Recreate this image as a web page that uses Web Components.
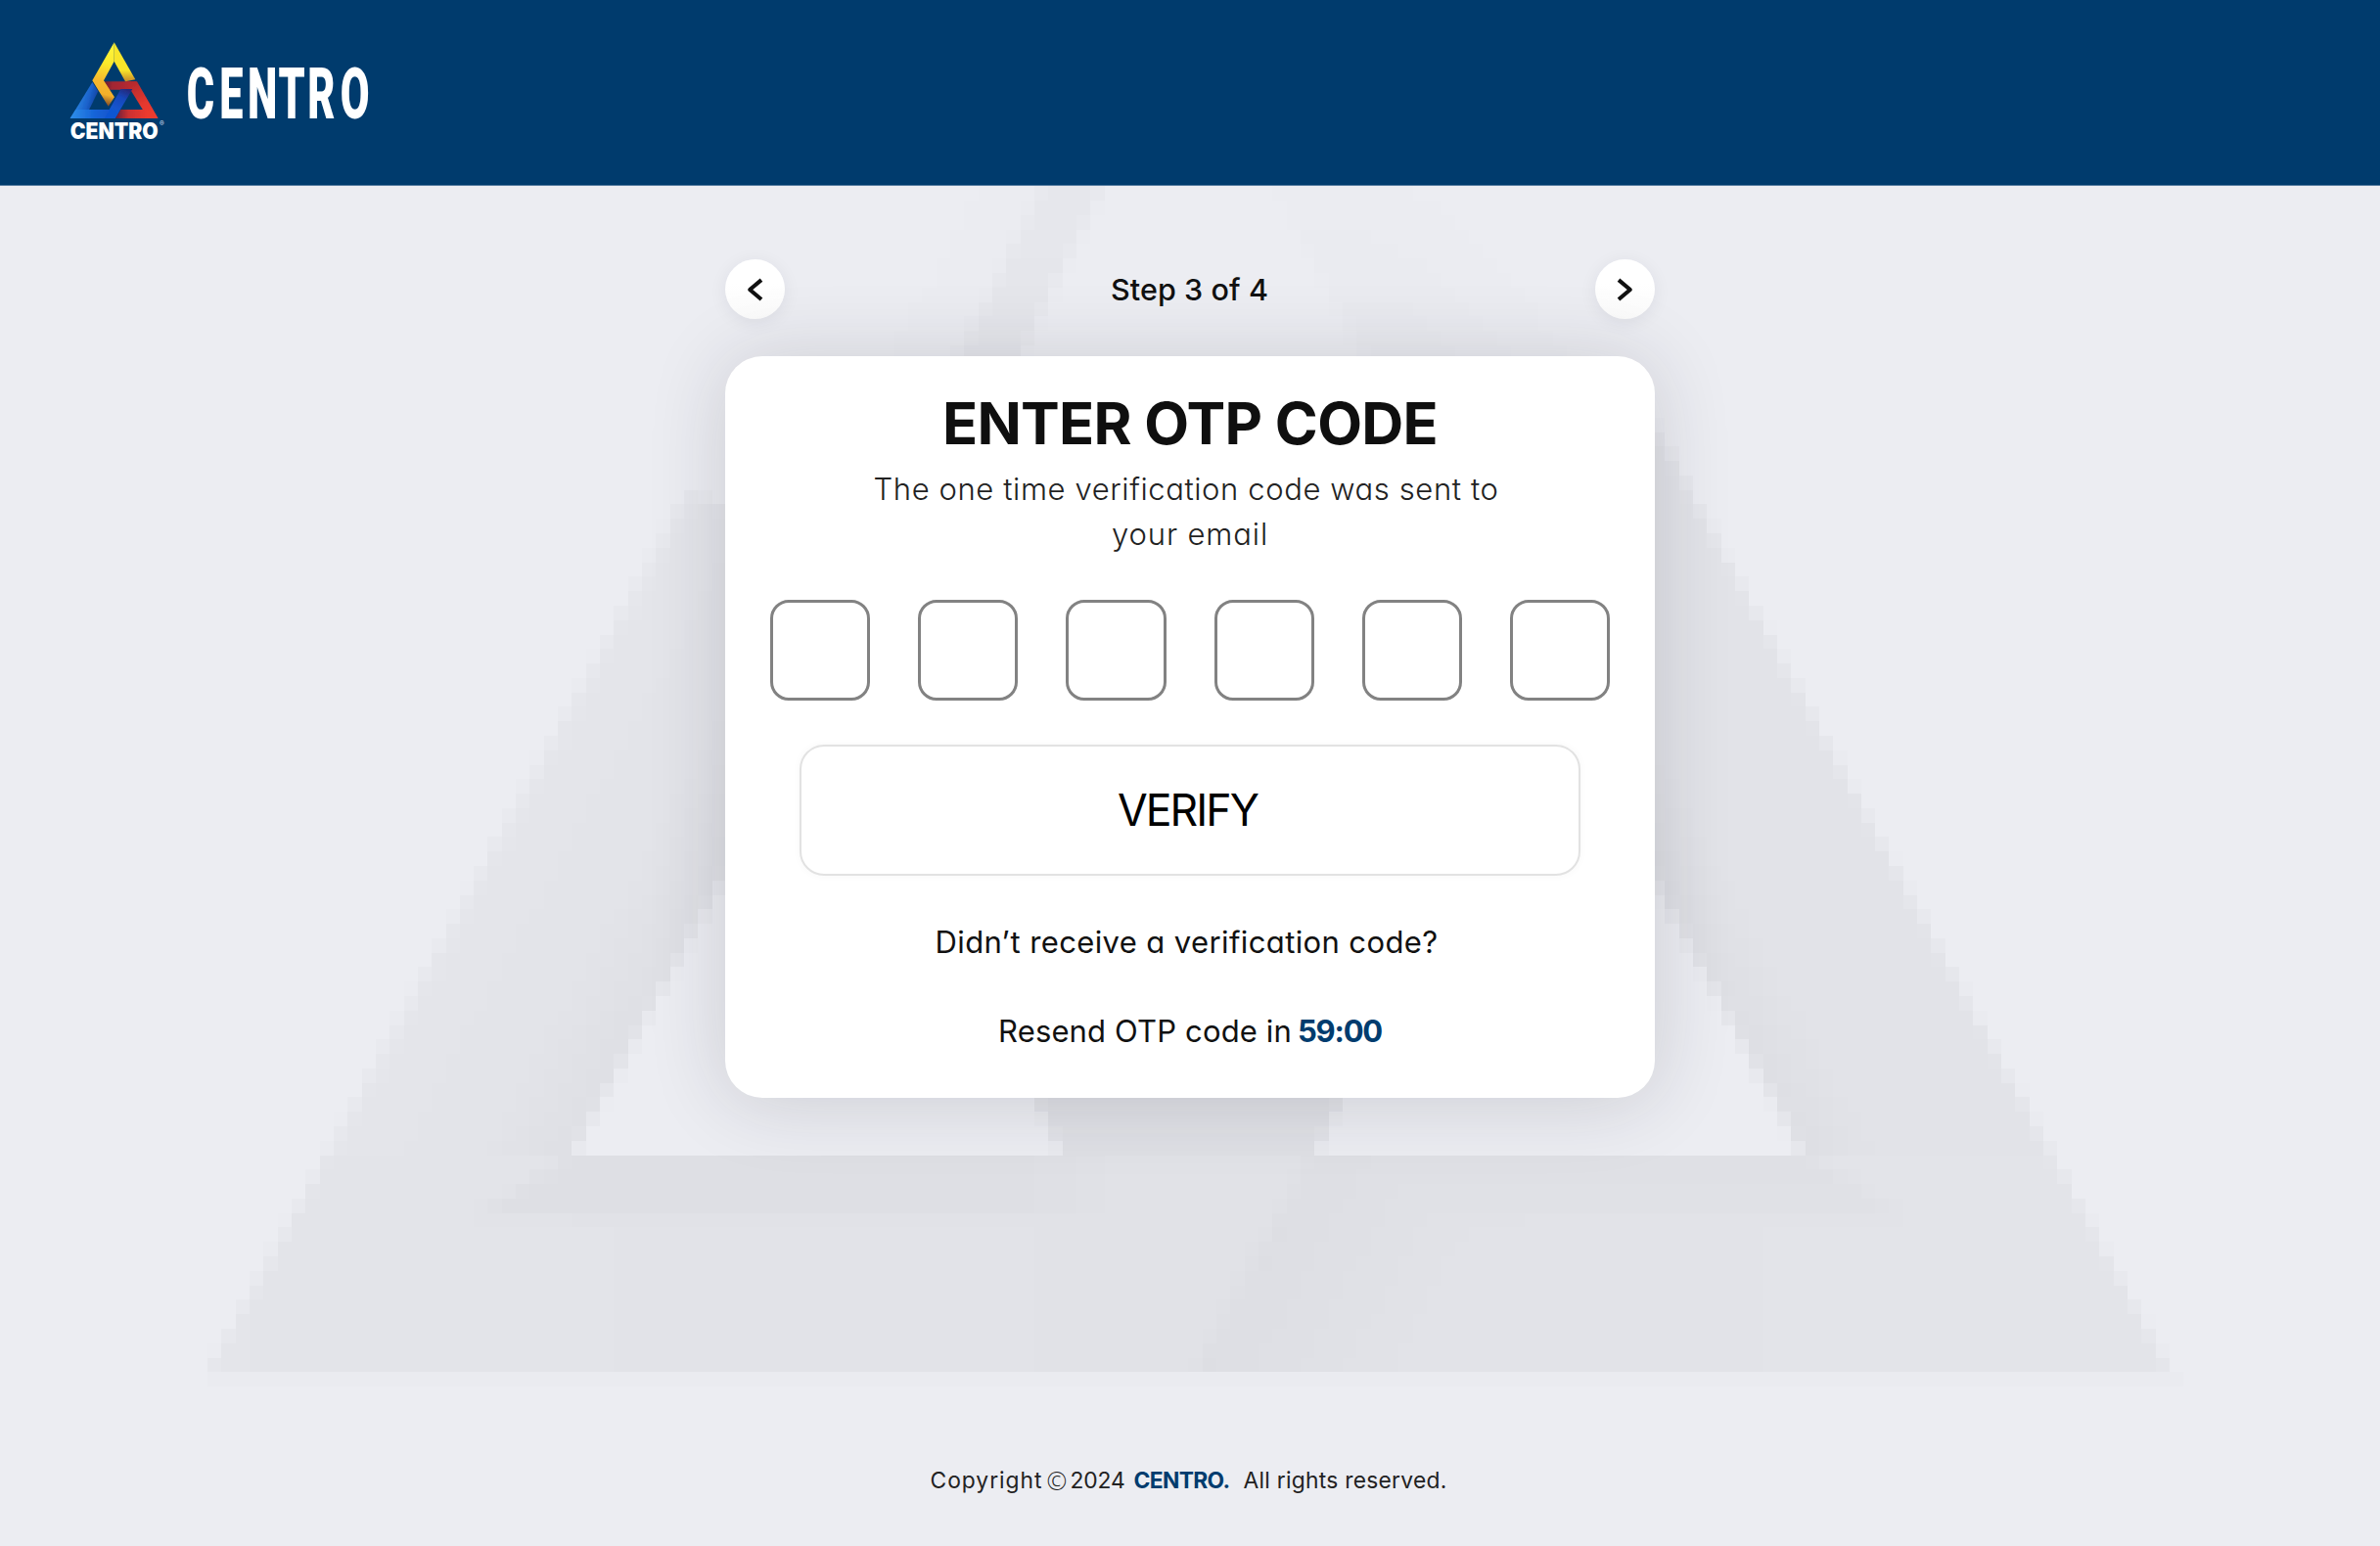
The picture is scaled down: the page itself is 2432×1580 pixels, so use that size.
<!DOCTYPE html>
<html lang="en">
<head>
<meta charset="utf-8">
<title>Centro</title>
<style>
body{margin:0;background:#ecedf2;font-family:Inter,"Open Sans",sans-serif;font-feature-settings:"cv11";color:#111}
</style>
</head>
<body>
<otp-page></otp-page>
<script>
const define=(name,html,setup)=>customElements.define(name,class extends HTMLElement{
  connectedCallback(){
    if(this.shadowRoot)return;
    this.attachShadow({mode:'open'}).innerHTML=html;
    if(setup)setup(this,this.shadowRoot);
  }
});

/* One line of text, tracked so that it fills the width given by "w". */
define('fit-line',`<style>
:host{display:block;white-space:nowrap;flex:none}
span{display:inline-block;white-space:pre}
</style><span></span>`,(host,root)=>{
  const s=root.querySelector('span'),w=+host.getAttribute('w');
  s.textContent=host.getAttribute('text');
  host.style.width=w+'px';
  const n=s.getBoundingClientRect().width;
  s.style.letterSpacing=((w-n)/s.textContent.length).toFixed(3)+'px';
});

define('brand-mark',`<style>:host{display:block;width:120px;height:120px}svg{display:block;overflow:visible}</style>
<svg width="120" height="120" viewBox="0 0 360 360">
<defs>
<linearGradient id="y" gradientUnits="userSpaceOnUse" x1="190" y1="60" x2="150" y2="235"><stop offset="0" stop-color="#fff43a"/><stop offset=".3" stop-color="#fbe92c"/><stop offset=".6" stop-color="#f6b82d"/><stop offset=".82" stop-color="#f3b02c"/><stop offset="1" stop-color="#7d4a28"/></linearGradient>
<linearGradient id="yr" gradientUnits="userSpaceOnUse" x1="205" y1="125" x2="205" y2="158"><stop offset="0" stop-color="#f8e52c"/><stop offset="1" stop-color="#c98d2c"/></linearGradient>
<linearGradient id="rt" gradientUnits="userSpaceOnUse" x1="135" y1="165" x2="235" y2="175"><stop offset="0" stop-color="#5d1c33"/><stop offset=".3" stop-color="#a12631"/><stop offset="1" stop-color="#b92b2f"/></linearGradient>
<linearGradient id="rr" gradientUnits="userSpaceOnUse" x1="235" y1="160" x2="290" y2="270"><stop offset="0" stop-color="#b52a2e"/><stop offset=".6" stop-color="#e6382e"/><stop offset="1" stop-color="#ee3b2f"/></linearGradient>
<linearGradient id="rb" gradientUnits="userSpaceOnUse" x1="175" y1="260" x2="270" y2="260"><stop offset="0" stop-color="#66203c"/><stop offset=".4" stop-color="#c93030"/><stop offset="1" stop-color="#ec3a2f"/></linearGradient>
<linearGradient id="bl" gradientUnits="userSpaceOnUse" x1="45" y1="215" x2="115" y2="235"><stop offset="0" stop-color="#2e8de6"/><stop offset=".6" stop-color="#1b62cc"/><stop offset="1" stop-color="#0f3e99"/></linearGradient>
<linearGradient id="bb" gradientUnits="userSpaceOnUse" x1="40" y1="260" x2="180" y2="260"><stop offset="0" stop-color="#2d8ce8"/><stop offset=".5" stop-color="#1664d8"/><stop offset="1" stop-color="#0f50c9"/></linearGradient>
<linearGradient id="bc" gradientUnits="userSpaceOnUse" x1="180" y1="255" x2="212" y2="185"><stop offset="0" stop-color="#1157d2"/><stop offset=".6" stop-color="#1648bb"/><stop offset="1" stop-color="#24297b"/></linearGradient>
<filter id="soft" x="-5%" y="-5%" width="110%" height="110%"><feGaussianBlur stdDeviation="1.5"/></filter>
</defs>
<g filter="url(#soft)">
<path d="M103 162 35 273H80L121 190Z" fill="url(#bl)"/>
<path d="M35 273 52 246H162L184 253 173 273Z" fill="url(#bb)"/>
<path d="M136 160H238L224 185H152Z" fill="url(#rt)"/>
<path d="M205 160H240L305 273H274L220 185Z" fill="url(#rr)"/>
<path d="M173 273 190 246H270L300 273Z" fill="url(#rb)"/>
<path d="M190 183H226L173 273H140Z" fill="url(#bc)"/>
<path d="M170 40 103 157 152 236 171 208 138 157 170 98Z" fill="url(#y)"/>
<path d="M170 40 235 154 204 160 170 98Z" fill="url(#yr)"/>
</g>
<text x="35" y="335" font-family="Inter,sans-serif" font-weight="900" font-size="68" fill="#fff" textLength="270" lengthAdjust="spacingAndGlyphs">CENTRO</text>
<text x="309" y="296" font-family="Inter,sans-serif" font-weight="700" font-size="21" fill="#c9d7e6">®</text>
</svg>`);

define('site-header',`<style>
:host{display:flex;align-items:flex-start;box-sizing:border-box;height:190px;padding:30px 60px;background:#003b6d;border-bottom:1px solid #5a7fa2}
svg{display:block;margin:34px 0 0 10px;overflow:visible}
</style><brand-mark></brand-mark>
<svg width="190" height="62"><text transform="translate(0 57.3) scale(.6 1)" x="1.3 57 105 157.5 207 263" y="0" font-family="Roboto,sans-serif" font-weight="900" font-size="72" fill="#fff">CENTRO</text></svg>`);

define('step-button',`<style>
:host{display:flex;width:61px;height:61px;border-radius:50%;align-items:center;justify-content:center;background:linear-gradient(#fff 40%,#fbfbfb);box-shadow:0 3px 18px rgba(30,30,60,.07)}
:host([dir-next]) svg{transform:scaleX(-1)}
</style><svg width="61" height="61" fill="none" stroke="#111" stroke-width="4.1"><path d="M37 21.2 25.2 31 37 41" stroke-linejoin="round"/></svg>`);

define('step-nav',`<style>:host{display:flex;align-items:center;justify-content:space-between;width:950px;height:61px}
fit-line{font-size:30.5px;font-weight:500;line-height:46px;padding:1px 1px 0 0}</style>
<step-button></step-button><fit-line text="Step 3 of 4" w="161"></fit-line><step-button dir-next></step-button>`);

define('otp-input',`<style>:host{display:flex;gap:49px}
i{box-sizing:border-box;width:102.3px;height:103px;border:3.5px solid #828282;border-radius:19px}</style>
<i></i><i></i><i></i><i></i><i></i><i></i>`);

define('verify-button',`<style>:host{display:flex;box-sizing:border-box;width:798px;height:134px;align-items:center;justify-content:center;border:2px solid #e2e2e2;border-radius:25px;box-shadow:0 0 8px rgba(0,0,0,.035);background:#fff}
fit-line{font-size:44.5px;color:#000;margin-right:5px}</style>
<fit-line text="VERIFY" w="143"></fit-line>`);

define('otp-card',`<style>
:host{display:flex;flex-direction:column;align-items:center;box-sizing:border-box;width:950px;height:758px;margin-top:38.4px;padding-top:38px;background:#fff;border-radius:38px;box-shadow:0 3px 80px rgba(30,28,50,.16)}
fit-line{font-size:31px;line-height:45.4px}
.title{font-size:59.5px;line-height:60px;font-weight:700;color:#0f0f0f}
.sub{font-weight:300;color:#222}
.first{margin:15px 8px 0 0}
otp-input,verify-button{margin-top:45px}
.ask{margin:45px 7px 0 0}
.resend{display:flex;margin-top:45.6px;gap:6px}
.resend b{font-weight:700;color:#003c6e}
</style>
<fit-line class="title" text="ENTER OTP CODE" w="506"></fit-line>
<fit-line class="sub first" text="The one time verification code was sent to" w="639"></fit-line>
<fit-line class="sub" text="your email" w="160"></fit-line>
<otp-input></otp-input><verify-button></verify-button>
<fit-line class="ask" text="Didn’t receive a verification code?" w="514"></fit-line>
<div class="resend"><fit-line text="Resend OTP code in" w="300"></fit-line><b><fit-line text="59:00" w="86"></fit-line></b></div>`);

define('site-footer',`<style>
:host{display:flex;margin-top:375.5px;font-size:22.8px;line-height:30px;color:#222;padding-right:3px}
.c{font-weight:300;margin-left:4px;font-size:25px;font-family:"Open Sans",sans-serif}
.y{margin-left:3px}.n{margin-left:9px;font-weight:700;color:#003c6e}.r{margin-left:14px}
</style>
<fit-line text="Copyright" w="115"></fit-line><fit-line class="c" text="©" w="21"></fit-line><fit-line class="y" text="2024" w="56"></fit-line><fit-line class="n" text="CENTRO." w="98"></fit-line><fit-line class="r" text="All rights reserved." w="208"></fit-line>`);

/* Coarse-grained triangle emblem behind the page content. */
define('emblem-backdrop',`<style>:host{display:block;position:absolute;inset:0;z-index:-1;overflow:hidden}svg{display:block}</style>
<svg width="2432" height="1580" shape-rendering="crispEdges"></svg>`,(host,root)=>{
  const cw=14.32,ch=14.78,x0=1085.6,y0=1402.3,S=.545;
  const clamp=v=>Math.max(0,Math.min(1,v));
  const depth=(x,y)=>{
    const up=1402.3-y;
    if(up<0)return 0;
    const L=212+up*S,R=2218-up*S;
    if(x<L||x>R)return 0;
    const v=1180.5-y;
    /* pale upper arm */
    if(y<370){
      const k=x-(1221-y*.49);
      if(k<=0)return k>-62?7-clamp((280-y)/90):1.6*clamp(1+(k+62)/130);
      const r=x-(1188+y*.56);
      return r>0?(1.2+2*clamp((y-190)/150))*clamp((250-r)/180):0;
    }
    if(x<760&&y<506+clamp((x-715)/40)*22)return 0;
    if(v>0){
      const a=584+v*S,b=1085-v*.48,c=1343+v*.48,d=1843-v*S;
      if(x>a&&x<b)return .5;
      if(x>c&&x<d)return .5;
      if(x<=a)return 9.5+4.5*clamp(1-(a-x)/95)-2*clamp(1-(x-L)/120);
      if(x>=d)return 10+5*clamp(1-(x-d)/85);
      return 13;
    }
    const dn=-v;
    let r=9.5+1.6*clamp(1-Math.abs(x-1216)/700);
    const la=584-dn*1.55,ra=1843+dn*1.7;
    if(dn<62&&x>la&&x<1130)r=14-2*clamp((x-1040)/90);
    if(dn<62&&x>1343&&x<ra)r=13.4-dn/45;
    const k=x-(1343-dn*.54);
    if(k>-20&&k<=0)r=Math.max(r,13+k/10);
    if(k>0&&k<230)r=Math.max(r,15-5*k/230);
    if(x<420)r-=.9*(420-x)/200;
    return r;
  };
  let out='';
  const edges=(o,s,m)=>{const a=[];for(let p=o-Math.ceil(o/s)*s;p<m;p+=s)a.push(p);return a};
  for(const y of edges(y0,ch,1580)){
    const top=Math.round(y),tall=Math.round(y+ch)-top;
    let run=null;
    const flush=()=>{if(run&&run.q>0){
      const v=run.q/2,left=Math.round(run.x);
      out+=`<rect x="${left}" y="${top}" width="${Math.round(run.e)-left}" height="${tall}" fill="rgb(${Math.round(236-v)},${Math.round(237-v)},${Math.round(242-v)})"/>`}};
    for(const x of edges(x0,cw,2432)){
      let t=0;
      for(let i=0;i<4;i++)for(let j=0;j<4;j++)t+=depth(x+(i+.5)*cw/4,y+(j+.5)*ch/4);
      let q=Math.round(t/8);
      if(Math.abs(y-y0)<2&&x>200&&x<2225)q=4;
      if(run&&run.q===q)run.e=x+cw;
      else{flush();run={x,e:x+cw,q}}
    }
    flush();
  }
  root.querySelector('svg').innerHTML=out;
});

define('otp-page',`<style>
:host{display:flex;flex-direction:column;position:relative;z-index:0;height:1580px;width:2432px;overflow:hidden}
main{display:flex;flex-direction:column;align-items:center;padding-top:75px}
</style>
<emblem-backdrop></emblem-backdrop>
<site-header></site-header>
<main><step-nav></step-nav><otp-card></otp-card><site-footer></site-footer></main>`);
</script>
</body>
</html>
